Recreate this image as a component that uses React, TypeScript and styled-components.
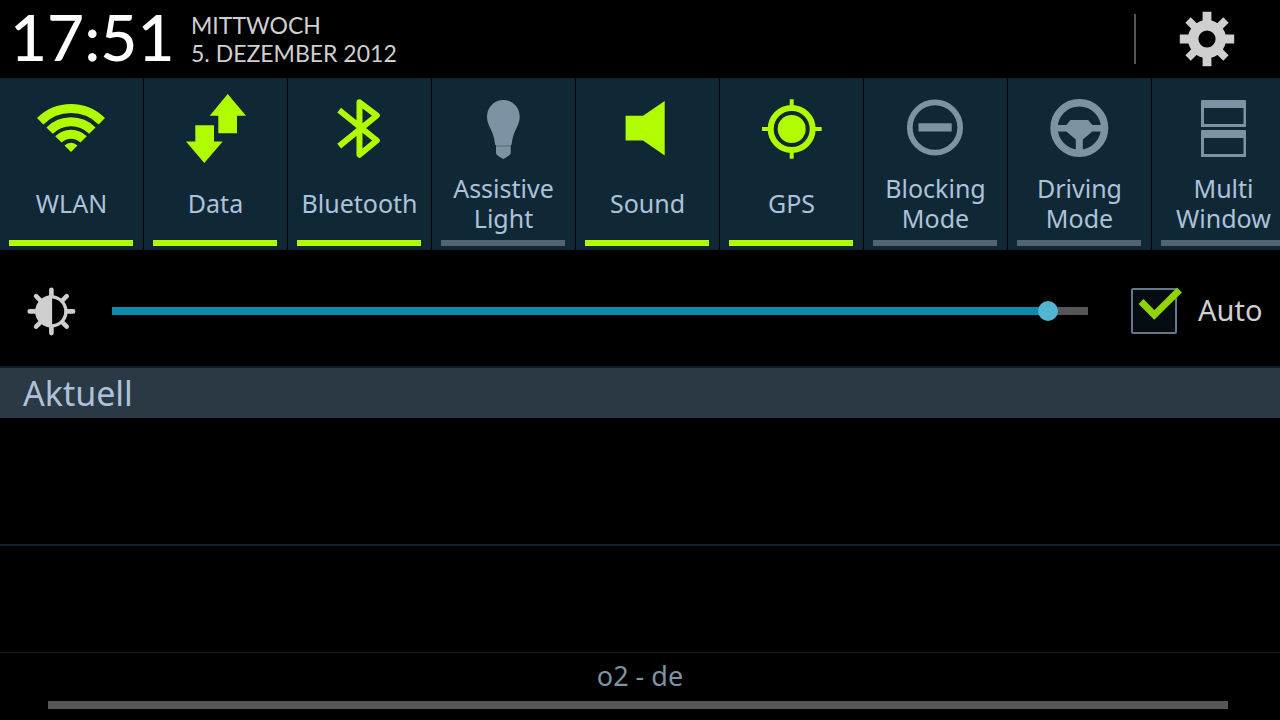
import React, { useState } from "react";
import styled, { createGlobalStyle } from "styled-components";

const color = {
  lime: "#b0fb00",
  tile: "#102836",
  label: "#acc2da",
  muted: "#7d93a4",
  idle: "#516473",
  light: "#cfcfcf",
  line: "#0f1c26",
};

const GlobalStyle = createGlobalStyle`
  * { box-sizing: border-box; }
  body {
    margin: 0;
    background: #000;
    font-family: "Noto Sans", "Open Sans", sans-serif;
  }
  button, input { font: inherit; margin: 0; }
`;

const Shade = styled.div`
  display: flex;
  flex-direction: column;
  min-height: 100vh;
  background: #000;
`;

const StatusHeader = styled.header`
  display: flex;
  align-items: center;
  height: 78px;
  padding: 0 45px 0 10px;
`;

const Clock = styled.time`
  width: 181px;
  padding-bottom: 4px;
  font-family: Lato, "Noto Sans", sans-serif;
  font-size: 64px;
  font-weight: 500;
  line-height: 68px;
  color: #fff;
  white-space: nowrap;
`;

const DateText = styled.div`
  flex: 1;
  font-family: Lato, "Noto Sans", sans-serif;
  font-size: 23px;
  line-height: 28px;
  color: ${color.light};
  text-transform: uppercase;
`;

const SettingsArea = styled.div`
  display: flex;
  align-items: center;
  height: 50px;
  padding-left: 43px;
  border-left: 2px solid #555;
`;

const IconButton = styled.button`
  display: flex;
  padding: 0;
  border: 0;
  background: none;
  color: ${color.light};
  cursor: pointer;
`;

const TileStrip = styled.div`
  display: flex;
  overflow-x: auto;
  scrollbar-width: none;
`;

const Tile = styled.button<{ $on: boolean }>`
  display: flex;
  flex: 0 0 144px;
  flex-direction: column;
  align-items: center;
  height: 172px;
  padding: 12px 0 4px;
  border: 0;
  border-right: 1px solid #000;
  background: ${color.tile};
  color: ${(p) => (p.$on ? color.lime : color.muted)};
  cursor: pointer;
`;

const TileLabel = styled.span`
  display: flex;
  align-items: center;
  justify-content: center;
  width: 113px;
  height: 60px;
  margin: 7px 0;
  font-size: 25px;
  line-height: 30px;
  text-align: center;
  color: ${color.label};
`;

const TileBar = styled.span<{ $on: boolean }>`
  align-self: stretch;
  height: 6px;
  margin: 0 10px 0 9px;
  background: ${(p) => (p.$on ? color.lime : color.idle)};
`;

const BrightnessRow = styled.section`
  display: flex;
  align-items: center;
  height: 116px;
  padding: 6px 0 0 26px;
  color: ${color.light};
`;

const Slider = styled.input`
  flex: 1;
  min-width: 0;
  height: 20px;
  margin: 0 43px 0 36px;
  appearance: none;
  background: linear-gradient(to right, #0c8bae var(--level), #545657 var(--level)) center / 100% 8px no-repeat;
  cursor: pointer;

  &::-webkit-slider-thumb {
    appearance: none;
    width: 20px;
    height: 20px;
    border-radius: 50%;
    background: #52b6d2;
  }
`;

const AutoLabel = styled.label`
  display: flex;
  align-items: center;
  gap: 21px;
  width: 149px;
  font-size: 29px;
  line-height: 40px;
  cursor: pointer;
`;

const AutoText = styled.span`
  padding-bottom: 2px;
`;

const CheckWrap = styled.span`
  position: relative;
  display: flex;
`;

const Checkbox = styled.input`
  width: 46px;
  height: 46px;
  appearance: none;
  border: 2px solid #63788a;
  border-radius: 2px;
  background: #060c11;

  & + svg { visibility: hidden; }
  &:checked + svg { visibility: visible; }
`;

const CheckMark = styled.svg`
  position: absolute;
  left: 0;
  top: 0;
  overflow: visible;
  pointer-events: none;
`;

const SectionTitle = styled.h2`
  margin: 0;
  padding: 0 23px;
  border-top: 2px solid ${color.line};
  background: #2a3944;
  font-size: 34px;
  font-weight: 400;
  line-height: 50px;
  color: ${color.label};
`;

const Notifications = styled.ul`
  display: flex;
  flex: 1;
  flex-direction: column;
  margin: 0;
  padding: 0;
  list-style: none;
`;

const EmptyRow = styled.li`
  flex: 1 0 107px;
  border-bottom: 1px solid #11202b;

  &:first-child {
    flex: 0 0 128px;
    border-bottom-width: 2px;
  }
`;

const Carrier = styled.footer`
  display: flex;
  flex-direction: column;
  padding-bottom: 11px;
`;

const CarrierName = styled.p`
  margin: 0;
  padding-bottom: 2px;
  font-size: 27px;
  line-height: 46px;
  text-align: center;
  color: ${color.muted};
`;

const Handle = styled.div`
  height: 8px;
  margin: 0 52px 0 48px;
  background: #555657;
`;

const TileIcon = ({ children }: { children: React.ReactNode }) => (
  <svg width="79" height="76" viewBox="32 12 79 76" fill="currentColor" aria-hidden="true">
    {children}
  </svg>
);

const tiles = [
  {
    label: "WLAN",
    on: true,
    icon: (
      <>
        <g fill="none" stroke="currentColor" strokeWidth="9">
          <path d="M40.2 43.2a43.6 43.6 0 0 1 61.6 0" />
          <path d="M49.6 52.6a30.3 30.3 0 0 1 42.8 0" />
          <path d="M58.4 61.4a17.8 17.8 0 0 1 25.2 0" />
        </g>
        <path d="M71 74l-6.5-6.5a9.2 9.2 0 0 1 13 0z" />
      </>
    ),
  },
  {
    label: "Data",
    on: true,
    icon: (
      <>
        <path d="M83.7 16L102 37.7h-9v17.6H74.3V37.7h-8.6z" />
        <path d="M60.3 85L42 63.5h9.3V47.3H70v16.2h8.7z" />
      </>
    ),
  },
  {
    label: "Bluetooth",
    on: true,
    icon: (
      <path
        d="M53.5 34L88.8 62.5 71.5 76.7V24.3L88.8 37.5 53.5 66.3"
        fill="none"
        stroke="currentColor"
        strokeWidth="6"
        strokeLinejoin="round"
        strokeLinecap="square"
      />
    ),
  },
  {
    label: "Assistive Light",
    on: false,
    icon: (
      <>
        <path d="M71.3 22a16.4 16.4 0 0 1 16.4 16.8c0 6-3 10.5-5 15.2-1.8 4.5-2.6 8-3.2 13H63.2c-.6-5-1.400-8.500-3.200-13-2-4.700-5-9.200-5-15.200A16.400 16.400 0 0 1 71.300 22z" />
        <path d="M64 67h14.700v8c0 1.500-3 3.500-4.200 4.200l-3.200 1.800-3-1.800c-1.300-.7-4.300-2.700-4.300-4.200z" />
        <path d="M64 68h14.700" stroke="#63788a" strokeWidth="1.500" />
      </>
    ),
  },
  {
    label: "Sound",
    on: true,
    icon: <path d="M49.600 37.700H67L88.700 23v54.500L67 62.500H49.600z" />,
  },
  {
    label: "GPS",
    on: true,
    icon: (
      <>
        <circle cx="71.700" cy="51" r="14" />
        <circle cx="71.700" cy="51" r="21" fill="none" stroke="currentColor" strokeWidth="6" />
        <path d="M71.700 21.300V29M71.700 73v7.700M42 51h7M94.500 51h7.200" stroke="currentColor" strokeWidth="4" />
      </>
    ),
  },
  {
    label: "Blocking Mode",
    on: false,
    icon: (
      <>
        <circle cx="71" cy="49.500" r="25.200" fill="none" stroke="currentColor" strokeWidth="5.700" />
        <path d="M54.500 45.300h33.200v8.200H54.500z" />
      </>
    ),
  },
  {
    label: "Driving Mode",
    on: false,
    icon: (
      <>
        <circle cx="71.300" cy="50" r="25.300" fill="none" stroke="currentColor" strokeWidth="7.400" />
        <path d="M62.500 42h17.600l4.200 5H95v6.400H84.300l-9.500 8V74h-7V61.400l-9.500-8H48V47h10.300z" />
      </>
    ),
  },
  {
    label: "Multi Window",
    on: false,
    icon: (
      <path
        fillRule="evenodd"
        d="M50 22h43a1 1 0 0 1 1 1v26H49V23a1 1 0 0 1 1-1zM52 30v16h39.500V30zM50 52h43a1 1 0 0 1 1 1v26H49V53a1 1 0 0 1 1-1zM52 60v16h39.500V60z"
      />
    ),
  },
];

const GearIcon = () => (
  <svg width="56" height="56" viewBox="-28 -28 56 56" aria-hidden="true">
    <g fill="currentColor">
      <path d="M-4.400-27.200h8.800v54.400h-8.800zM-27.200-4.400h54.400v8.800h-54.400z" mask="url(#gear-hole)" />
      <path d="M-3.800-26.800h7.600v53.600h-7.600zM-26.800-3.800h53.600v7.600h-53.600z" transform="rotate(45)" mask="url(#gear-hole)" />
    </g>
    <circle r="13.800" fill="none" stroke="currentColor" strokeWidth="10.400" />
    <mask id="gear-hole" maskUnits="userSpaceOnUse" x="-28" y="-28" width="56" height="56">
      <path d="M-28-28h56v56h-56z" fill="#fff" />
      <circle r="10" fill="#000" />
    </mask>
  </svg>
);

const BrightnessIcon = () => (
  <svg width="50" height="50" viewBox="-25.400 -25.400 50 50" aria-hidden="true">
    <g stroke="currentColor" strokeWidth="4.600" strokeLinecap="round">
      <path d="M0-21.700v6M0 15.700v6M-21.700 0h6M15.700 0h6" />
      <path d="M-15.300-15.300l4 4M15.300-15.300l-4 4M-15.300 15.300l4-4M15.300 15.300l-4-4" />
    </g>
    <circle r="14.500" fill="none" stroke="currentColor" strokeWidth="3.400" />
    <path d="M.7-14v28H0a14 14 0 0 1 0-28z" fill="currentColor" />
  </svg>
);

export default function App() {
  const [active, setActive] = useState(tiles.map((t) => t.on));
  const [level, setLevel] = useState(247);
  const [auto, setAuto] = useState(true);

  const toggle = (index: number) => setActive(active.map((on, i) => (i === index ? !on : on)));

  return (
    <Shade>
      <GlobalStyle />
      <StatusHeader>
        <Clock dateTime="2012-12-05T17:51">17:51</Clock>
        <DateText>
          <div>Mittwoch</div>
          <div>5. Dezember 2012</div>
        </DateText>
        <SettingsArea>
          <IconButton type="button" aria-label="Einstellungen">
            <GearIcon />
          </IconButton>
        </SettingsArea>
      </StatusHeader>

      <TileStrip>
        {tiles.map((tile, i) => (
          <Tile key={tile.label} type="button" $on={active[i]} aria-pressed={active[i]} onClick={() => toggle(i)}>
            <TileIcon>{tile.icon}</TileIcon>
            <TileLabel>{tile.label}</TileLabel>
            <TileBar $on={active[i]} />
          </Tile>
        ))}
      </TileStrip>

      <BrightnessRow>
        <BrightnessIcon />
        <Slider
          type="range"
          aria-label="Helligkeit"
          min={0}
          max={255}
          value={level}
          onChange={(e) => setLevel(Number(e.target.value))}
          style={{ "--level": `${(level / 255) * 100}%` } as React.CSSProperties}
        />
        <AutoLabel>
          <CheckWrap>
            <Checkbox type="checkbox" checked={auto} onChange={(e) => setAuto(e.target.checked)} />
            <CheckMark width="46" height="46" viewBox="0 0 46 46" aria-hidden="true">
              <path d="M10 13.500L23.300 27 48.500 2" fill="none" stroke="#8fd400" strokeWidth="6.800" />
            </CheckMark>
          </CheckWrap>
          <AutoText>Auto</AutoText>
        </AutoLabel>
      </BrightnessRow>

      <SectionTitle>Aktuell</SectionTitle>
      <Notifications>
        <EmptyRow />
        <EmptyRow />
      </Notifications>

      <Carrier>
        <CarrierName>o2 - de</CarrierName>
        <Handle />
      </Carrier>
    </Shade>
  );
}
